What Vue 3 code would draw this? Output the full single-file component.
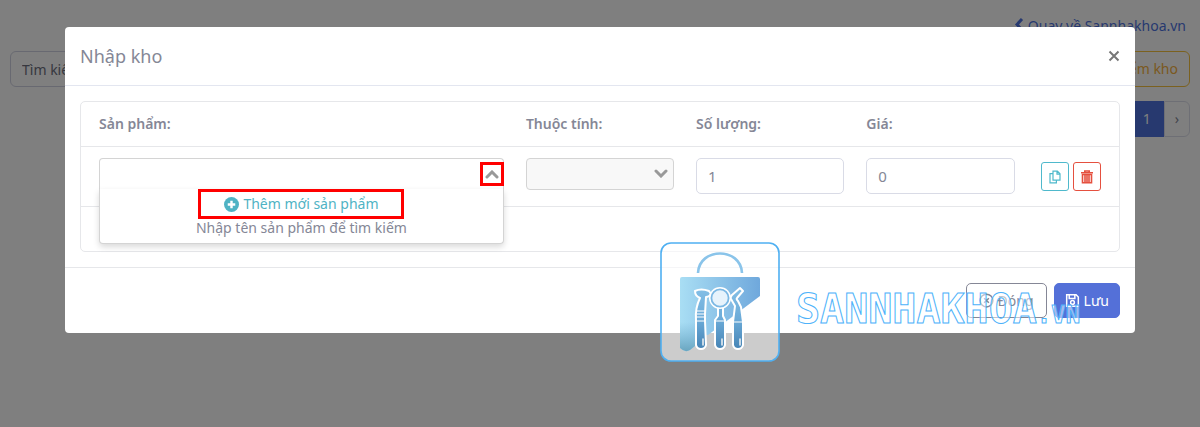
<template>
  <div class="page">
    <!-- Warehouse page -->
    <div class="warehouse">
      <div class="top-link">
        <a href="#">
          <svg class="back-icon" viewBox="0 0 10 16"><path d="M8 1L3 6.5 8 12" /></svg>
          Quay về Sannhakhoa.vn
        </a>
      </div>
      <div class="toolbar">
        <input v-model="keyword" class="search" type="text" placeholder="Tìm kiếm" aria-label="Tìm kiếm" />
        <button class="btn-check" type="button">Kiểm kho</button>
      </div>
      <nav class="pagination">
        <button type="button" class="page-btn">‹</button>
        <button type="button" class="page-btn active">1</button>
        <button type="button" class="page-btn">›</button>
      </nav>
    </div>

    <div class="backdrop"></div>

    <!-- Stock-in dialog -->
    <div class="modal-wrap">
      <div class="modal" role="dialog" aria-labelledby="modal-title">
        <div class="modal-header">
          <h5 id="modal-title">Nhập kho</h5>
          <button class="close" type="button" aria-label="Close">
            <svg viewBox="0 0 12 12"><path d="M1.5 1.5l9 9M10.5 1.5l-9 9" /></svg>
          </button>
        </div>

        <div class="modal-body">
          <div class="card">
            <table>
              <thead>
                <tr>
                  <th class="col-product"><label for="product">Sản phẩm:</label></th>
                  <th class="col-field"><label for="attribute">Thuộc tính:</label></th>
                  <th class="col-field"><label for="quantity">Số lượng:</label></th>
                  <th class="col-field"><label for="price">Giá:</label></th>
                  <th></th>
                </tr>
              </thead>
              <tbody>
                <tr>
                  <td>
                    <div class="picker" :class="{ open }">
                      <input id="product" v-model="product" type="text" />
                      <button class="toggle" type="button" aria-label="Toggle" @click="open = !open">
                        <svg class="chevron" viewBox="0 0 14 9"><path d="M2 7l5-5 5 5" /></svg>
                      </button>
                      <div v-if="open" class="dropdown">
                        <button class="add-product" type="button">
                          <svg viewBox="0 0 16 16">
                            <circle cx="8" cy="8" r="8" fill="currentColor" />
                            <path d="M8 4v8M4 8h8" stroke="#fff" stroke-width="2.6" />
                          </svg>
                          Thêm mới sản phẩm
                        </button>
                        <span class="hint">Nhập tên sản phẩm để tìm kiếm</span>
                      </div>
                    </div>
                  </td>
                  <td>
                    <div class="select-box">
                      <select id="attribute" disabled></select>
                      <svg class="chevron" viewBox="0 0 14 9"><path d="M2 2l5 5 5-5" /></svg>
                    </div>
                  </td>
                  <td><input id="quantity" v-model="quantity" class="form-control" type="text" /></td>
                  <td><input id="price" v-model="price" class="form-control" type="text" /></td>
                  <td>
                    <div class="actions">
                      <button class="btn-icon info" type="button" aria-label="Copy">
                        <svg viewBox="0 0 14 14">
                          <path d="M5 1.2h4.4l2.6 2.6v6.4H5zM9 1.2v3h3M5 3.6H2v9.2h6.4v-2.4" />
                        </svg>
                      </button>
                      <button class="btn-icon danger" type="button" aria-label="Delete">
                        <svg viewBox="0 0 14 14">
                          <path d="M1 2.7h12M4.8 2V1h4.4v1" />
                          <path d="M2.5 4.5v8.3h9V4.5zM5 5v7M7 5v7M9 5v7" />
                        </svg>
                      </button>
                    </div>
                  </td>
                </tr>
              </tbody>
            </table>
            <div class="card-footer"></div>
          </div>
        </div>

        <div class="modal-footer">
          <button class="btn btn-outline" type="button">
            <svg viewBox="0 0 16 16"><circle cx="8" cy="8" r="6.8" /><path d="M5.5 5.5l5 5M10.5 5.5l-5 5" /></svg>
            Đóng
          </button>
          <button class="btn btn-primary" type="button">
            <svg viewBox="0 0 16 16">
              <path d="M1.8 1.8h10l2.4 2.4v10H1.8zM4.5 2v3.8h6V2" />
              <circle cx="8" cy="10" r="2" />
            </svg>
            Lưu
          </button>
        </div>
      </div>
    </div>

    <!-- Brand watermark -->
    <div class="watermark">
      <svg class="brand-icon" viewBox="0 0 120 120">
        <defs>
          <linearGradient id="bag" x1="0" x2="1" y1="0" y2="0">
            <stop offset="0" stop-color="#a9def4" />
            <stop offset="1" stop-color="#6fa8dc" />
          </linearGradient>
          <linearGradient id="bag-dark" x1="0" x2="0" y1="0" y2="1">
            <stop offset="0" stop-color="#73b0d0" stop-opacity="0" />
            <stop offset="1" stop-color="#6aa6c0" />
          </linearGradient>
          <linearGradient id="tool" gradientUnits="userSpaceOnUse" x1="0" x2="0" y1="46" y2="108">
            <stop offset="0" stop-color="#84bfe6" />
            <stop offset=".5" stop-color="#6cabd8" />
            <stop offset="1" stop-color="#4583b4" />
          </linearGradient>
        </defs>
        <rect x="1" y="1" width="118" height="118" rx="10" fill="#fff" fill-opacity=".6" stroke="#4fb0f2" stroke-width="1.6" />
        <path d="M38 31c1-26 43-26 44 0" fill="none" stroke="#8ac4ea" stroke-width="2.6" />
        <path d="M22 35h76q2 0 2 2v17L48 93H35v11l-5 4q-5 3-10-2V37q0-2 2-2z" fill="url(#bag)" />
        <path d="M20 80h15v24l-5 4q-5 3-10-2z" fill="url(#bag-dark)" />
        <g fill="url(#tool)" stroke="#fff" stroke-width="2" stroke-linejoin="round">
          <!-- handpiece -->
          <path d="M35 49q6-3 14 0l2 3q-2 3-5 3l-1 17v7l1 24q-1 4-5 4t-5-4V78q-1-12 4-22-5-2-5-7z" />
          <!-- mirror handle -->
          <path d="M58 64h5v10l2 4v25q-1 4-5 4t-5-4V78l3-4z" />
          <!-- probe -->
          <path d="M80 46l3 3-6 7q-1 1 1 3l3 6 2 15v23q-1 4-5 4t-5-4V80l2-16-4-7q-1-2 1-4z" />
        </g>
        <path d="M37 69h8M37 72h8M36 75h9M36 79h10M55 79h10M73 80h10" fill="none" stroke="#fff" stroke-width="1.2" />
        <circle cx="60" cy="56" r="11" fill="#fff" />
        <circle cx="60" cy="56" r="8.6" fill="#e7f3fc" stroke="#7bb8e4" stroke-width="1.8" />
        <path d="M43 97v6M62 97v6M80 97v6" stroke="#e6edf2" stroke-width="1.6" stroke-linecap="round" />
      </svg>
      <span class="brand-name">SANNHAKHOA<span class="brand-tld">.VN</span></span>
    </div>
  </div>
</template>

<script setup>
import { ref } from 'vue'

const keyword = ref('')
const product = ref('')
const quantity = ref('1')
const price = ref('0')
// product dropdown state
const open = ref(true)
</script>

<style>
body {
  margin: 0;
  background: #fff;
}
</style>

<style scoped>
.page {
  position: relative;
  min-height: 100vh;
  overflow: hidden;
  font-family: "Noto Sans", "Open Sans", sans-serif;
  font-size: 14px;
  line-height: 22px;
  color: #858796;
}

.page *,
.page *::before {
  box-sizing: border-box;
}

button,
input,
select {
  font: inherit;
  color: inherit;
  margin: 0;
}

button {
  cursor: pointer;
  padding: 0;
}

svg {
  display: block;
  flex: none;
}

/* Warehouse page */
.warehouse {
  display: flex;
  flex-direction: column;
  padding: 15px 10px;
}

.top-link {
  display: flex;
  justify-content: flex-end;
  padding-right: 4px;
}

.top-link a {
  display: flex;
  align-items: center;
  gap: 4px;
  color: #4e73df;
  text-decoration: none;
}

.back-icon {
  width: 10px;
  height: 16px;
  fill: none;
  stroke: currentColor;
  stroke-width: 3;
}

.toolbar {
  display: flex;
  justify-content: space-between;
  margin-top: 14px;
}

.search {
  width: 240px;
  height: 36px;
  padding: 0 11px;
  border: 1px solid #d1d3e2;
  border-radius: 6px;
  background: #fff;
}

.search::placeholder {
  color: #6e707e;
  opacity: 1;
}

.btn-check {
  height: 36px;
  padding: 0 11px;
  border: 1px solid #f6c23e;
  border-radius: 6px;
  background: #fff;
  color: #f6b23e;
}

.pagination {
  display: flex;
  justify-content: flex-end;
  margin-top: 14px;
}

.page-btn {
  height: 36px;
  padding: 0 10px;
  border: 1px solid #dddfeb;
  background: #fff;
}

.page-btn:last-child {
  border-radius: 0 6px 6px 0;
}

.page-btn.active {
  padding: 0 12px;
  border-color: #4e73df;
  background: #4e73df;
  color: #fff;
}

.backdrop {
  position: absolute;
  inset: 0;
  background: rgba(0, 0, 0, 0.5);
}

/* Dialog */
.modal-wrap {
  position: absolute;
  inset: 0;
  padding: 27px 65px;
}

.modal {
  background: #fff;
  border-radius: 4px;
}

.modal-header {
  display: flex;
  align-items: center;
  justify-content: space-between;
  height: 59px;
  padding: 0 15px;
  border-bottom: 1px solid #e3e6f0;
}

.modal-header h5 {
  margin: 0;
  font-size: 18px;
  font-weight: 400;
}

.close {
  border: 0;
  background: none;
  color: #777;
}

.close svg {
  width: 12px;
  height: 12px;
  stroke: currentColor;
  stroke-width: 2;
}

.modal-body {
  padding: 15px;
}

.card {
  border: 1px solid #e6e7ea;
  border-radius: 5px;
}

.card-footer {
  height: 44px;
}

table {
  width: 100%;
  table-layout: fixed;
  border-collapse: collapse;
}

th,
td {
  padding: 11px;
  text-align: left;
  vertical-align: top;
  border-bottom: 1px solid #e6e7ea;
}

th {
  font-weight: 600;
}

th:first-child,
td:first-child {
  padding-left: 18px;
}

.col-product {
  width: 41.8%;
}

.col-field {
  width: 16.4%;
}

.form-control {
  display: block;
  width: 100%;
  height: 36px;
  padding: 0 11px;
  border: 1px solid #d9dbe6;
  border-radius: 5px;
  background: #fff;
  font-size: 15px;
}

/* Product picker */
.picker {
  position: relative;
  display: flex;
  align-items: center;
  height: 32px;
  border: 1px solid #d4d4d4;
  border-radius: 4px;
}

.picker.open {
  border-bottom-color: transparent;
  border-radius: 4px 4px 0 0;
}

.picker input {
  flex: 1;
  min-width: 0;
  height: 28px;
  border: 0;
  background: transparent;
  outline: none;
}

.toggle {
  display: flex;
  align-items: center;
  justify-content: center;
  width: 24px;
  height: 24px;
  margin-right: -1px;
  border: 3px solid #f00;
  background: #fff;
}

.chevron {
  width: 14px;
  height: 9px;
  fill: none;
  stroke: #999;
  stroke-width: 3;
  stroke-linecap: round;
}

.dropdown {
  position: absolute;
  top: 30px;
  left: -1px;
  right: -1px;
  z-index: 2;
  display: flex;
  flex-direction: column;
  align-items: center;
  height: 55px;
  border: 1px solid #d4d4d4;
  border-top: 0;
  border-radius: 0 0 4px 4px;
  background: #fff;
  box-shadow: 0 3px 6px rgba(0, 0, 0, 0.15);
}

.add-product {
  display: flex;
  align-items: center;
  gap: 4px;
  height: 30px;
  padding: 0 23px;
  border: 3px solid #f00;
  background: #fff;
  color: #4fb3c4;
}

.add-product svg {
  width: 15px;
  height: 15px;
}

.hint {
  line-height: 18px;
}

.select-box {
  position: relative;
}

.select-box select {
  display: block;
  width: 100%;
  height: 32px;
  border: 1px solid #d4d4d4;
  border-radius: 4px;
  background: #f8f8f8;
  appearance: none;
  opacity: 1;
}

.select-box .chevron {
  position: absolute;
  top: 11px;
  right: 6px;
}

.actions {
  display: flex;
  gap: 4px;
  padding: 4px;
}

.btn-icon {
  display: flex;
  align-items: center;
  justify-content: center;
  width: 28px;
  height: 29px;
  border: 1px solid currentColor;
  border-radius: 3px;
  background: #fff;
}

.btn-icon svg {
  width: 14px;
  height: 14px;
  fill: none;
  stroke: currentColor;
  stroke-width: 1.2;
}

.info {
  color: #4fb9cc;
}

.danger {
  color: #e5503f;
}

.danger svg {
  stroke-width: 1.6;
}

/* Footer */
.modal-footer {
  display: flex;
  justify-content: flex-end;
  gap: 7px;
  padding: 15px;
  border-top: 1px solid #e6e7ea;
}

.btn {
  display: flex;
  align-items: center;
  gap: 4px;
  height: 35px;
  padding: 0 10px;
  border-radius: 5px;
}

.btn svg {
  width: 15px;
  height: 15px;
  fill: none;
  stroke: currentColor;
  stroke-width: 1.6;
}

.btn-outline {
  padding: 0 12px;
  border: 1px solid #858796;
  background: #fff;
}

.btn-primary {
  border: 1px solid #5470d8;
  background: #5470d8;
  color: #fff;
}

/* Watermark */
.watermark {
  position: absolute;
  top: 242px;
  left: 55%;
  display: flex;
  align-items: center;
  gap: 16px;
  pointer-events: none;
}

.brand-icon {
  width: 120px;
  height: 120px;
}

.brand-name {
  padding-top: 20px;
  font-family: "DejaVu Sans Mono", monospace;
  font-size: 40px;
  font-weight: 700;
  line-height: 48px;
  white-space: nowrap;
  color: rgba(255, 255, 255, 0.5);
  -webkit-text-stroke: 1px #4db2fa;
}

.brand-tld {
  font-size: 24px;
}
</style>
